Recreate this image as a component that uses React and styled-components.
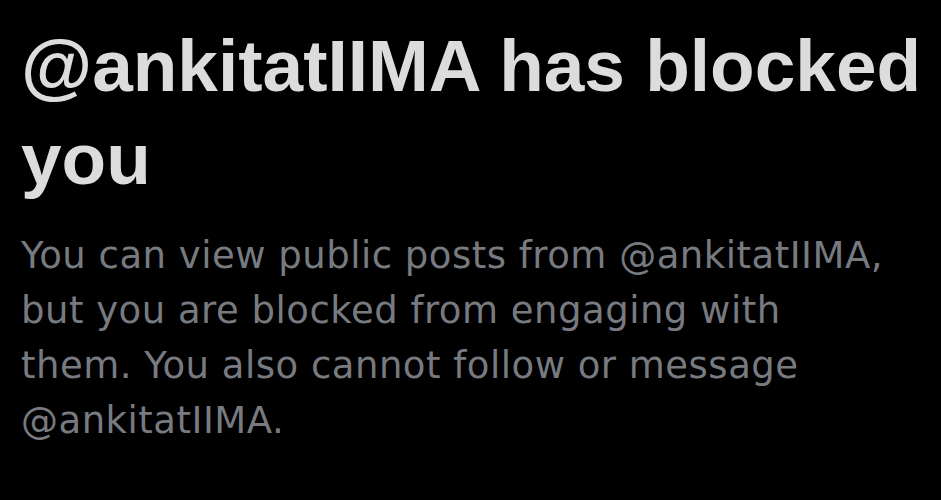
import React from "react";
import styled, { createGlobalStyle } from "styled-components";

const GlobalStyle = createGlobalStyle`
  html, body {
    margin: 0;
    padding: 0;
    background: #000;
  }
`;

function App() {
  const handle = "@ankitatIIMA";
  return (
    <>
      <GlobalStyle />
      <Page>
        <Title>{handle} has blocked you</Title>
        <Description>
          You can view public posts from {handle},<br />
          but you are blocked from engaging with<br />
          them. You also cannot follow or message<br />
          {handle}.
        </Description>
      </Page>
    </>
  );
}

export default App;

const Page = styled.div`
  width: 941px;
  height: 500px;
  box-sizing: border-box;
  padding: 19px 4px 0 21px;
  background: #000;
  display: flex;
  flex-direction: column;
  gap: 23px;
`;

const Title = styled.h1`
  margin: 0;
  font-family: "Liberation Sans", Arial, sans-serif;
  font-weight: 700;
  font-size: 73px;
  line-height: 93px;
  color: #dcdcdc;
`;

const Description = styled.p`
  margin: 0;
  font-family: "DejaVu Sans", sans-serif;
  font-size: 37px;
  letter-spacing: 0.5px;
  line-height: 55px;
  color: #777b80;
  white-space: nowrap;
`;
